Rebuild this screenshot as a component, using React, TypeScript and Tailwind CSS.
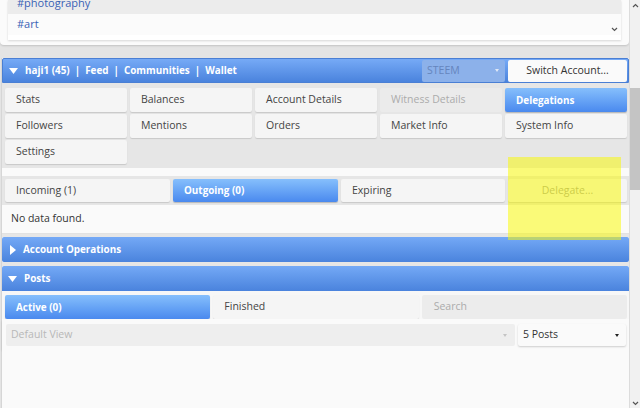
import React from "react";

const Tab = ({ label, active, disabled, center }: { label: string; active?: boolean; disabled?: boolean; center?: boolean }) => {
  let cls = "h-full flex items-center rounded-[2px] ";
  cls += center ? "justify-center " : "pl-[11px] ";
  if (active) cls += "bg-gradient-to-b from-[#86bffc] to-[#4a89ee] text-white font-bold text-[9.9px] shadow-[0_1px_1px_rgba(0,0,0,0.2)]";
  else if (disabled) cls += "bg-[#ebebeb] text-[#ababab]";
  else cls += "bg-[#f5f5f5] text-[#444] shadow-[0_1px_1px_rgba(0,0,0,0.13)]";
  return <div className={cls}>{label}</div>;
};

const Down = ({ c = "#fff" }: { c?: string }) => (
  <svg width="9" height="6" viewBox="0 0 9 6"><polygon points="0,0 9,0 4.5,6" fill={c} /></svg>
);
const Right = () => (
  <svg width="6" height="10" viewBox="0 0 6 10"><polygon points="0,0 6,5 0,10" fill="#fff" /></svg>
);
const Chev = ({ up }: { up?: boolean }) => (
  <svg width="7" height="5" viewBox="0 0 7 5">
    <polyline points={up ? "1,4 3.5,1.5 6,4" : "1,1 3.5,3.5 6,1"} fill="none" stroke="#555" strokeWidth="1.2" />
  </svg>
);

export default function App() {
  return (
    <div className="w-[640px] h-[408px] overflow-hidden flex bg-[#e4e4e4] font-['Open_Sans',sans-serif] text-[10.5px] text-[#444] relative">
      <div className="w-[629px] flex flex-col">
        {/* top card */}
        <div className="h-[45px] bg-[#fbfbfb] rounded-b-[4px] shadow-[0_1px_2px_rgba(0,0,0,0.15)] px-[8px] shrink-0">
          <div className="h-[40px] bg-white shadow-[0_1px_2px_rgba(0,0,0,0.15)] overflow-hidden relative">
            <div className="h-[21px] -mt-[7px] bg-[#ececec] flex items-center pl-[9px] text-[#3a62b5] text-[11px]">#photography</div>
            <div className="h-[21px] bg-[#fbfbfb] flex items-center pl-[9px] text-[#3a62b5] text-[11px]">#art</div>
            <div className="absolute right-[3px] bottom-[8px]"><Chev /></div>
          </div>
        </div>

        {/* main panel */}
        <div className="mt-[13px] flex flex-col ml-[1px] flex-1 bg-[#f8f8f8] border-l border-[#d6d6d6]">
          <div className="h-[25px] bg-gradient-to-b from-[#76aaf6] to-[#4a83dd] border border-[#4a7fd4] rounded-t-[2px] flex items-center text-white">
            <div className="ml-[6px] mr-[7px] flex items-center"><Down /></div>
            <div className="flex items-center font-bold text-[9.9px]">
              <span>haji1 (45)</span>
              <span className="mx-[5px]">|</span>
              <span>Feed</span>
              <span className="mx-[5px]">|</span>
              <span>Communities</span>
              <span className="mx-[5px]">|</span>
              <span>Wallet</span>
            </div>
            <div className="flex-1" />
            <div className="w-[83px] h-[22px] bg-[#8cb1ea] rounded-[2px] flex items-center pl-[5px] pr-[6px] text-[#6585bd]">
              <span className="flex-1">STEEM</span>
              <svg width="4" height="3" viewBox="0 0 4 3"><polygon points="0,0 4,0 2,3" fill="#e0e8f6" /></svg>
            </div>
            <div className="ml-[3px] mr-[1px] w-[119px] h-[22px] bg-[#fafafa] rounded-[2px] flex items-center justify-center text-[#333]">Switch Account...</div>
          </div>

          <div className="bg-[#e6e6e6] pt-[5px] pb-[4px] pl-[3px] pr-[2px] grid grid-cols-5 gap-x-[3px] gap-y-[2px] auto-rows-[24px]">
            <Tab label="Stats" />
            <Tab label="Balances" />
            <Tab label="Account Details" />
            <Tab label="Witness Details" disabled />
            <Tab label="Delegations" active />
            <Tab label="Followers" />
            <Tab label="Mentions" />
            <Tab label="Orders" />
            <Tab label="Market Info" />
            <Tab label="System Info" />
            <Tab label="Settings" />
          </div>

          <div className="h-[8px] bg-[#fafafa]" />

          <div className="bg-[#e6e6e6] pt-[3px] pb-[3px] pl-[3px] pr-[2px] grid grid-cols-[165px_165px_164px_1fr] gap-x-[3px] h-[29px]">
            <Tab label="Incoming (1)" />
            <Tab label="Outgoing (0)" active />
            <Tab label="Expiring" />
            <div className="h-full flex items-center justify-center rounded-[2px] bg-[#f5f5f5] text-[#9a9a9a] shadow-[0_1px_1px_rgba(0,0,0,0.13)]">Delegate...</div>
          </div>

          <div className="h-[29px] bg-[#fafafa] flex items-center pl-[9px] text-[#333] border-b border-[#e2e2e2]">No data found.</div>
          <div className="h-[3px] bg-[#e6e6e6]" />

          <div className="h-[25px] bg-gradient-to-b from-[#74a9f6] to-[#4a83dd] rounded-[2px] flex items-center text-white font-bold text-[9.9px]">
            <div className="ml-[8px] mr-[7px] flex items-center"><Right /></div>
            <span>Account Operations</span>
          </div>
          <div className="h-[4px] bg-[#e6e6e6]" />
          <div className="h-[25px] bg-gradient-to-b from-[#74a9f6] to-[#4a83dd] rounded-t-[2px] flex items-center text-white font-bold text-[9.9px]">
            <div className="ml-[6px] mr-[7px] flex items-center"><Down /></div>
            <span>Posts</span>
          </div>

          <div className="bg-[#f7f7f7] pt-[4px] pl-[3px] pr-[2px] grid grid-cols-3 gap-x-[3px] h-[28px]">
            <Tab label="Active (0)" active />
            <Tab label="Finished" />
            <div className="h-full flex items-center pl-[12px] rounded-[2px] bg-[#ececec] text-[#ababab]">Search</div>
          </div>
          <div className="bg-[#fafafa] pt-[5px] pb-[3px] pl-[4px] pr-[3px] flex gap-x-[3px] shadow-[0_2px_2px_rgba(0,0,0,0.12)]">
            <div className="w-[509px] h-[22px] bg-[#eeeeee] rounded-[2px] flex items-center pl-[5px] pr-[8px] text-[#b8b8b8]">
              <span className="flex-1">Default View</span>
              <svg width="4" height="3" viewBox="0 0 4 3"><polygon points="0,0 4,0 2,3" fill="#c4c4c4" /></svg>
            </div>
            <div className="flex-1 h-[22px] bg-[#fafafa] rounded-[2px] flex items-center pl-[5px] pr-[7px] text-[#333] shadow-[0_1px_2px_rgba(0,0,0,0.18)]">
              <span className="flex-1">5 Posts</span>
              <svg width="4" height="3" viewBox="0 0 4 3"><polygon points="0,0 4,0 2,3" fill="#222" /></svg>
            </div>
          </div>
          <div className="flex-1 bg-[#fafafa]" />
        </div>
      </div>

      {/* scrollbar */}
      <div className="w-[11px] flex flex-col bg-[#f1f1f1] border-l border-[#dcdcdc]">
        <div className="h-[10px] flex items-center justify-center"><Chev up /></div>
        <div className="h-[78px]" />
        <div className="h-[102px] bg-[#c4c4c4]" />
        <div className="flex-1" />
        <div className="h-[10px] flex items-center justify-center"><Chev /></div>
      </div>

      {/* highlight overlay */}
      <div className="absolute left-[508px] top-[157px] w-[113px] h-[83px] bg-[rgba(250,250,0,0.52)]" />
    </div>
  );
}
